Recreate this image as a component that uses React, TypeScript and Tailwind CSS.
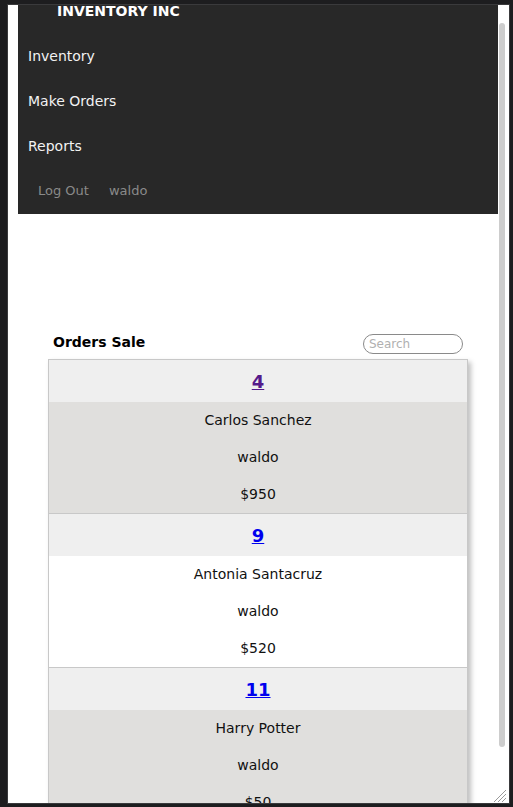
const orders = [
  { id: 4, name: 'Carlos Sanchez', user: 'waldo', total: '$950', visited: true, bg: 'bg-[#e0dfdd]' },
  { id: 9, name: 'Antonia Santacruz', user: 'waldo', total: '$520', visited: false, bg: 'bg-white' },
  { id: 11, name: 'Harry Potter', user: 'waldo', total: '$50', visited: false, bg: 'bg-[#e0dfdd]' },
]

const NavBar = () => {
  return (
    <nav className="ml-[10px] w-[480px] h-[209px] bg-[#282828] text-[14px] shrink-0 overflow-hidden">
      <div className="pl-[39px] -mt-[5px] h-[34px] text-[14px] font-bold text-white leading-[22px]">INVENTORY INC</div>
      <ul className="pl-[10px]">
        <li className="h-[45px] leading-[45px] text-[#f2f2f2]">Inventory</li>
        <li className="h-[45px] leading-[45px] text-[#f2f2f2]">Make Orders</li>
        <li className="h-[45px] leading-[45px] text-[#f2f2f2]">Reports</li>
      </ul>
      <div className="flex gap-[20px] pl-[20px] h-[44px] items-center text-[13px] text-[#8a8a8a]">
        <span>Log Out</span>
        <span>waldo</span>
      </div>
    </nav>
  )
}

const OrderCard = () => {
  return (
    <div className="ml-[40px] w-[420px] border border-[#c8c8c8] shadow-[3px_3px_5px_rgba(0,0,0,0.25)]">
      {orders.map((o, i) => (
        <div key={o.id} className={i > 0 ? 'border-t border-[#c8c8c8]' : ''}>
          <div className="h-[42px] bg-[#efefef] flex items-center justify-center">
            <a
              href="#"
              className={`text-[18px] font-bold underline ${o.visited ? 'text-[#551a8b]' : 'text-[#0000ee]'}`}
            >
              {o.id}
            </a>
          </div>
          <div className={`${o.bg} text-[#111] text-center`}>
            <p className="h-[37px] leading-[37px]">{o.name}</p>
            <p className="h-[37px] leading-[37px]">{o.user}</p>
            <p className="h-[37px] leading-[37px]">{o.total}</p>
          </div>
        </div>
      ))}
    </div>
  )
}

const App = () => {
  return (
    <div className="w-[513px] h-[807px] bg-[#1d1d1f] pt-[4px] pl-[7px] pr-[3px] pb-[3px] overflow-hidden" style={{ fontFamily: '"DejaVu Sans", sans-serif' }}>
      <div className="relative h-[800px] border border-[#3a3a3c] bg-white flex overflow-hidden text-[14px]">
        <main className="w-[490px] flex flex-col shrink-0">
          <NavBar />
          <div className="h-[120px] shrink-0" />
          <div className="flex items-center justify-between pl-[45px] pr-[35px] h-[24px]">
            <h3 className="font-bold text-black -mt-[3px]">Orders Sale</h3>
            <input
              placeholder="Search"
              className="w-[100px] h-[20px] rounded-full border border-[#8a8a8a] px-[5px] text-[12px] placeholder:text-[#b0b0b0] outline-none"
            />
          </div>
          <div className="h-[5px] shrink-0" />
          <OrderCard />
        </main>
        <div className="flex-1 pt-[18px] pl-[1px] pr-[3px]">
          <div className="h-[724px] w-[6px] rounded-full bg-[#cdcdcd]" />
        </div>
        <svg className="absolute right-[3px] bottom-[1px]" width="13" height="13" viewBox="0 0 13 13">
          <path d="M13 1 L1 13 M13 5 L5 13 M13 9 L9 13" stroke="#9a9a9a" strokeWidth="1" />
        </svg>
      </div>
    </div>
  )
}

export default App
